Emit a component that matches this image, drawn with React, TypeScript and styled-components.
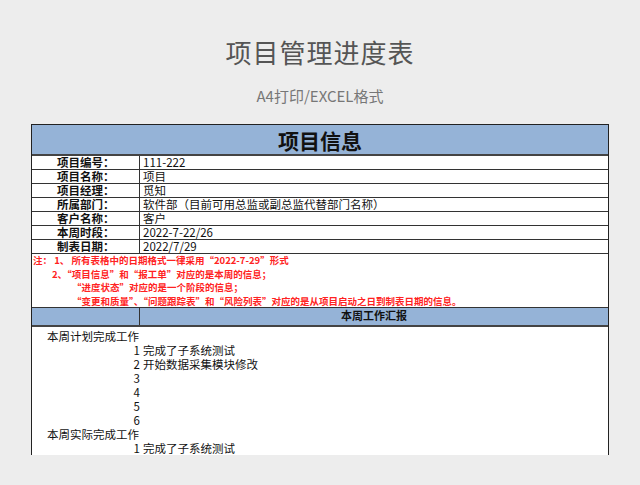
import React from "react";
import styled, { createGlobalStyle } from "styled-components";

const G = createGlobalStyle`
  body{margin:0;background:#ededed;font-family:"Noto Sans CJK SC","Liberation Sans",sans-serif;}
`;
const Page = styled.div`width:640px;height:485px;overflow:hidden;display:flex;flex-direction:column;align-items:center;`;
const Title = styled.div`margin-top:33px;height:38px;font-size:26px;color:#555;letter-spacing:1px;line-height:38px;`;
const Sub = styled.div`margin-top:15px;font-size:15px;color:#777;line-height:20px;`;
const Sheet = styled.div`margin-top:18px;width:578px;height:331px;background:#fff;border:1px solid #222;border-bottom:none;box-sizing:border-box;overflow:hidden;display:flex;flex-direction:column;`;
const Head = styled.div`height:29px;background:#95b3d7;border-bottom:2px solid #444;display:flex;align-items:center;justify-content:center;font-size:21px;font-weight:bold;color:#111;`;
const Row = styled.div`height:14px;display:grid;grid-template-columns:108px 1fr;border-bottom:1px solid #333;box-sizing:border-box;font-size:11.5px;line-height:13px;color:#111;`;
const Lab = styled.div`border-right:1px solid #333;font-weight:bold;padding-left:25px;`;
const Val = styled.div`padding-left:3px;`;
const Notes = styled.div`height:54px;border-bottom:1px solid #333;box-sizing:border-box;color:#f22;font-size:9.5px;font-weight:bold;line-height:13.5px;`;
const NL = styled.div<{ $i: number }>`padding-left:${p => p.$i}px;white-space:nowrap;`;
const Head2 = styled.div`height:25px;background:#95b3d7;border-bottom:2px solid #444;display:grid;grid-template-columns:108px 1fr;font-size:11px;font-weight:bold;color:#111;`;
const H2L = styled.div`border-right:1px solid #333;`;
const H2R = styled.div`text-align:center;line-height:14px;`;
const Gap = styled.div`height:2px;flex:none;`;
const WRow = styled.div`height:14px;flex:none;overflow:hidden;display:grid;grid-template-columns:108px 1fr;font-size:11.5px;line-height:14px;color:#111;`;
const WL = styled.div<{ $r?: boolean }>`text-align:${p => (p.$r ? "right" : "left")};padding-left:${p => (p.$r ? 0 : 15)}px;white-space:nowrap;overflow:hidden;`;
const WV = styled.div`padding-left:3px;white-space:nowrap;`;

const info = [
  ["项目编号：", "111-222"],
  ["项目名称：", "项目"],
  ["项目经理：", "觅知"],
  ["所属部门：", "软件部（目前可用总监或副总监代替部门名称）"],
  ["客户名称：", "客户"],
  ["本周时段：", "2022-7-22/26"],
  ["制表日期：", "2022/7/29"],
];
const work: [string, string, boolean][] = [
  ["本周计划完成工作", "", false],
  ["1", "完成了子系统测试", true],
  ["2", "开始数据采集模块修改", true],
  ["3", "", true],
  ["4", "", true],
  ["5", "", true],
  ["6", "", true],
  ["本周实际完成工作", "", false],
  ["1", "完成了子系统测试", true],
];

export default function App() {
  return (
    <Page>
      <G />
      <Title>项目管理进度表</Title>
      <Sub>A4打印/EXCEL格式</Sub>
      <Sheet>
        <Head>项目信息</Head>
        {info.map(([a, b]) => (
          <Row key={a}><Lab>{a}</Lab><Val>{b}</Val></Row>
        ))}
        <Notes>
          <NL $i={1}>注： 1、 所有表格中的日期格式一律采用“2022-7-29”形式</NL>
          <NL $i={20}>2、“项目信息”和“报工单”对应的是本周的信息；</NL>
          <NL $i={40}>“进度状态”对应的是一个阶段的信息；</NL>
          <NL $i={40}>“变更和质量”、“问题跟踪表”和“风险列表”对应的是从项目启动之日到制表日期的信息。</NL>
        </Notes>
        <Head2><H2L /><H2R>本周工作汇报</H2R></Head2>
        <Gap />
        {work.map(([a, b, r], i) => (
          <WRow key={i}><WL $r={r}>{a}</WL><WV>{b}</WV></WRow>
        ))}
      </Sheet>
    </Page>
  );
}
